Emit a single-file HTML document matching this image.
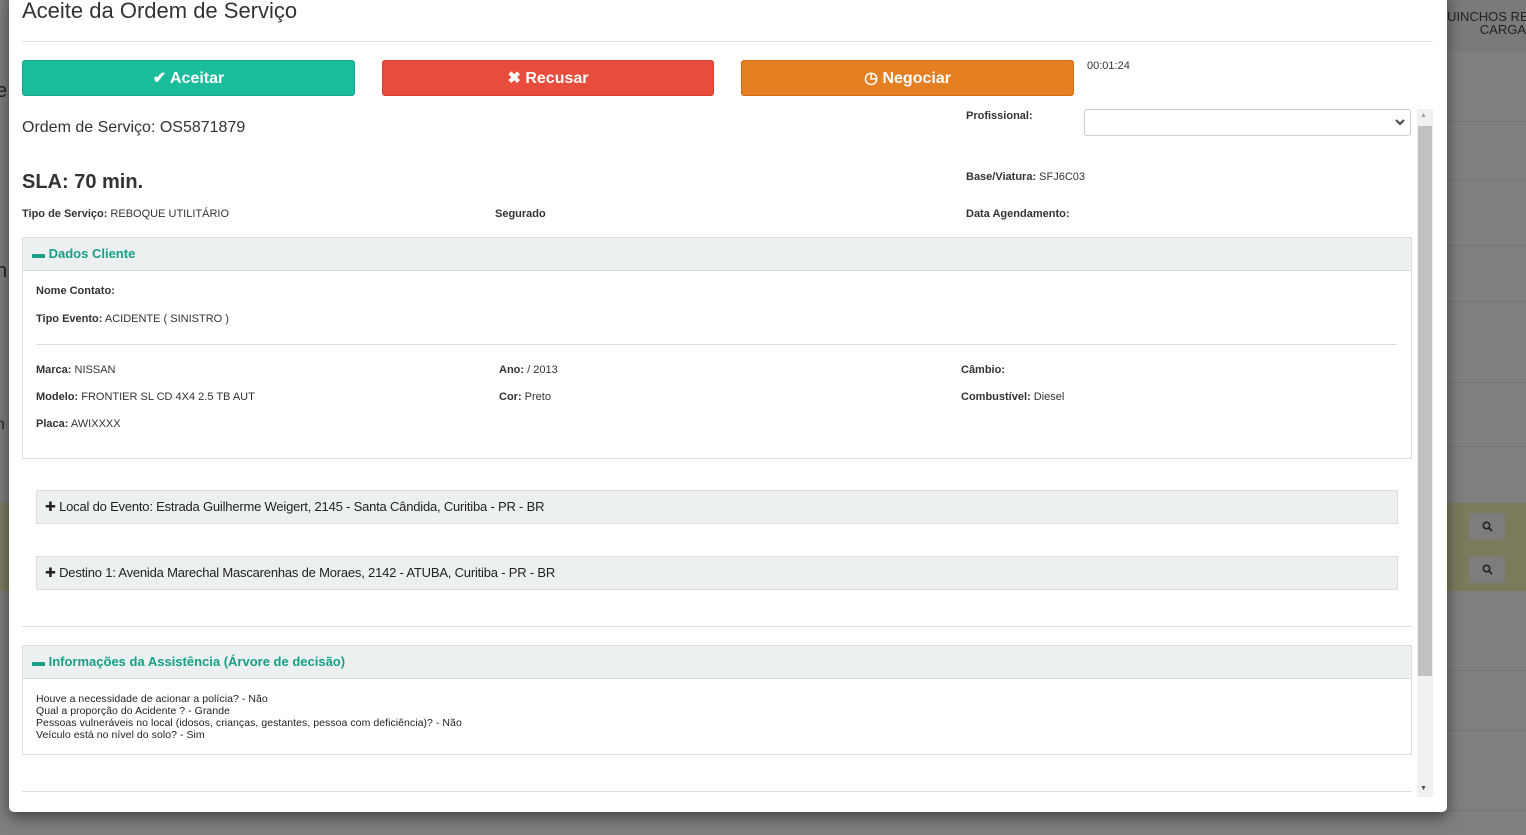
<!DOCTYPE html>
<html><head><meta charset="utf-8"><style>
*{box-sizing:border-box;margin:0;padding:0}
body{width:1526px;height:835px;overflow:hidden;background:#7f7f7f;font-family:"Liberation Sans",Arial,sans-serif;color:#333;position:relative}
.a{position:absolute;white-space:nowrap}
.hl{position:absolute;height:1px;background:#747474}
.modal{position:absolute;left:9px;top:-10px;width:1438px;height:822px;background:#fff;border-radius:0 0 5px 5px;box-shadow:0 5px 15px rgba(0,0,0,.5)}
.btn{position:absolute;top:60px;height:36px;border-radius:3px;color:#fff;font-weight:bold;font-size:16px;text-align:center;line-height:35px}
.s{font-size:11px}
b{font-weight:bold}
.panelh{position:absolute;background:#ecf0f1;border:1px solid #ddd}
.g{color:#16a085;font-weight:bold;font-size:13px}
.sb{position:absolute;left:1469px;width:36px;height:27px;background:#7d7d7d;border-radius:3px}
.sb svg{position:absolute;left:13px;top:8px}
</style></head><body>
<div class="a" style="left:1447px;top:0;width:79px;height:52px;background:#7a7a7a"></div>
<div class="a" style="left:1447px;top:10px;width:79px;font-size:13px;color:#222;text-align:right;line-height:13px;overflow:hidden">UINCHOS RET<br>CARGA</div>
<div class="hl" style="left:1447px;top:121px;width:79px"></div>
<div class="hl" style="left:1447px;top:179px;width:79px"></div>
<div class="hl" style="left:1447px;top:245px;width:79px"></div>
<div class="hl" style="left:1447px;top:301px;width:79px"></div>
<div class="hl" style="left:1447px;top:382px;width:79px"></div>
<div class="hl" style="left:1447px;top:446px;width:79px"></div>
<div class="a" style="left:1447px;top:503px;width:79px;height:88px;background:#7c7a5d"></div>
<div class="sb" style="top:513px"><svg width="11" height="11" viewBox="0 0 11 11"><circle cx="4.5" cy="4.5" r="3.2" fill="none" stroke="#222" stroke-width="1.6"/><path d="M7 7l3 3" stroke="#222" stroke-width="1.8"/></svg></div>
<div class="sb" style="top:556px"><svg width="11" height="11" viewBox="0 0 11 11"><circle cx="4.5" cy="4.5" r="3.2" fill="none" stroke="#222" stroke-width="1.6"/><path d="M7 7l3 3" stroke="#222" stroke-width="1.8"/></svg></div>
<div class="hl" style="left:1447px;top:670px;width:79px"></div>
<div class="hl" style="left:1447px;top:730px;width:79px"></div>
<div class="hl" style="left:1447px;top:810px;width:79px"></div>
<div class="a" style="left:0;top:503px;width:9px;height:88px;background:#7c7a5d"></div>
<div class="a" style="left:-4px;top:80px;font-size:20px;color:#222">e</div>
<div class="a" style="left:-4px;top:260px;font-size:20px;color:#222">n</div>
<div class="a" style="left:-4px;top:416px;font-size:16px;color:#222">n</div>

<div class="modal"></div>
<div class="a" style="left:22px;top:-2px;font-size:22px;color:#333">Aceite da Ordem de Serviço</div>
<div class="a" style="left:22px;top:41px;width:1411px;height:1px;background:#e5e5e5"></div>

<div class="btn" style="left:22px;width:333px;background:#1abc9c;border:1px solid #17a689">&#10004; Aceitar</div>
<div class="btn" style="left:382px;width:332px;background:#e74c3c;border:1px solid #d33f2f">&#10006; Recusar</div>
<div class="btn" style="left:741px;width:333px;background:#e67e22;border:1px solid #cf6d15">&#9719; Negociar</div>
<div class="a s" style="left:1087px;top:60px">00:01:24</div>

<div class="a" style="left:1417px;top:109px;width:16px;height:688px;background:#f1f1f1"></div>
<div class="a" style="left:1418px;top:126px;width:14px;height:550px;background:#c1c1c1"></div>
<div class="a" style="left:1420px;top:112px;font-size:7px;color:#a3a3a3">&#9650;</div>
<div class="a" style="left:1420px;top:785px;font-size:7px;color:#505050">&#9660;</div>

<div class="a" style="left:22px;top:119px;font-size:16px">Ordem de Serviço: OS5871879</div>
<div class="a s" style="left:966px;top:110px"><b>Profissional:</b></div>
<div class="a" style="left:1084px;top:109px;width:327px;height:27px;border:1px solid #ccc;border-radius:3px"></div>
<svg class="a" style="left:1395px;top:118px" width="10" height="8" viewBox="0 0 10 8"><path d="M1 2l4 4 4-4" fill="none" stroke="#444" stroke-width="2"/></svg>

<div class="a" style="left:22px;top:171px;font-size:20px;font-weight:bold">SLA: 70 min.</div>
<div class="a s" style="left:966px;top:171px"><b>Base/Viatura:</b> SFJ6C03</div>
<div class="a s" style="left:22px;top:208px"><b>Tipo de Serviço:</b> REBOQUE UTILITÁRIO</div>
<div class="a s" style="left:495px;top:208px"><b>Segurado</b></div>
<div class="a s" style="left:966px;top:208px"><b>Data Agendamento:</b></div>

<div class="a" style="left:22px;top:237px;width:1390px;height:222px;border:1px solid #ddd"></div>
<div class="panelh" style="left:22px;top:237px;width:1390px;height:34px"></div>
<div class="a g" style="left:32px;top:246px">&#9644; Dados Cliente</div>
<div class="a s" style="left:36px;top:285px"><b>Nome Contato:</b></div>
<div class="a s" style="left:36px;top:313px"><b>Tipo Evento:</b> ACIDENTE ( SINISTRO )</div>
<div class="a" style="left:36px;top:344px;width:1361px;height:1px;background:#ddd"></div>
<div class="a s" style="left:36px;top:364px"><b>Marca:</b> NISSAN</div>
<div class="a s" style="left:499px;top:364px"><b>Ano:</b> / 2013</div>
<div class="a s" style="left:961px;top:364px"><b>Câmbio:</b></div>
<div class="a s" style="left:36px;top:391px"><b>Modelo:</b> FRONTIER SL CD 4X4 2.5 TB AUT</div>
<div class="a s" style="left:499px;top:391px"><b>Cor:</b> Preto</div>
<div class="a s" style="left:961px;top:391px"><b>Combustível:</b> Diesel</div>
<div class="a s" style="left:36px;top:418px"><b>Placa:</b> AWIXXXX</div>

<div class="panelh" style="left:36px;top:490px;width:1362px;height:34px"></div>
<div class="a" style="left:45px;top:499px;font-size:13px;color:#222;letter-spacing:-0.2px">&#10010; Local do Evento: Estrada Guilherme Weigert, 2145 - Santa Cândida, Curitiba - PR - BR</div>
<div class="panelh" style="left:36px;top:556px;width:1362px;height:34px"></div>
<div class="a" style="left:45px;top:565px;font-size:13px;color:#222;letter-spacing:-0.2px">&#10010; Destino 1: Avenida Marechal Mascarenhas de Moraes, 2142 - ATUBA, Curitiba - PR - BR</div>

<div class="a" style="left:22px;top:626px;width:1390px;height:1px;background:#ddd"></div>
<div class="a" style="left:22px;top:645px;width:1390px;height:110px;border:1px solid #ddd"></div>
<div class="panelh" style="left:22px;top:645px;width:1390px;height:34px"></div>
<div class="a g" style="left:32px;top:654px">&#9644; Informações da Assistência (Árvore de decisão)</div>
<div class="a" style="left:36px;top:693px;font-size:10.5px;line-height:12px;color:#222;letter-spacing:0.05px">Houve a necessidade de acionar a polícia? - Não<br>Qual a proporção do Acidente ? - Grande<br>Pessoas vulneráveis no local (idosos, crianças, gestantes, pessoa com deficiência)? - Não<br>Veículo está no nível do solo? - Sim</div>
<div class="a" style="left:22px;top:791px;width:1390px;height:1px;background:#ddd"></div>
</body></html>
